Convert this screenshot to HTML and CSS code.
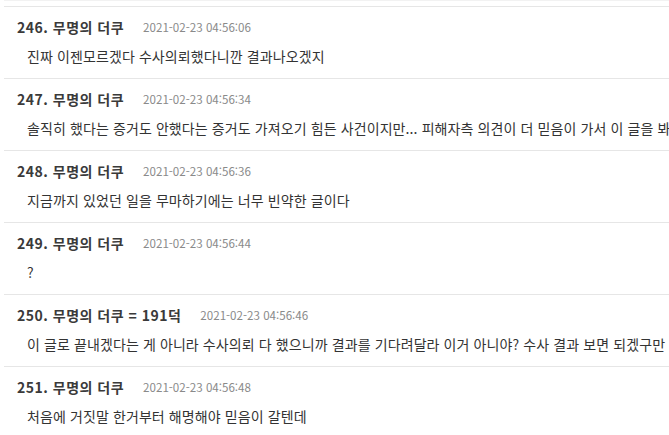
FILE: index.html
```html
<!DOCTYPE html>
<html lang="ko">
  <head>
    <meta charset="UTF-8" />
    <meta name="viewport" content="width=device-width, initial-scale=1.0" />
    <title>댓글</title>
    <link rel="stylesheet" href="styles.css">
  </head>
  <body>
    <ul class="comments">
      <li class="comment">
        <div class="comment-head">
          <span class="author">246. 무명의 더쿠</span>
          <span class="date">2021-02-23 04:56:06</span>
        </div>
        <div class="comment-body">진짜 이젠모르겠다 수사의뢰했다니깐 결과나오겠지</div>
      </li>
      <li class="comment">
        <div class="comment-head">
          <span class="author">247. 무명의 더쿠</span>
          <span class="date">2021-02-23 04:56:34</span>
        </div>
        <div class="comment-body">솔직히 했다는 증거도 안했다는 증거도 가져오기 힘든 사건이지만... 피해자측 의견이 더 믿음이 가서 이 글을 봐도</div>
      </li>
      <li class="comment">
        <div class="comment-head">
          <span class="author">248. 무명의 더쿠</span>
          <span class="date">2021-02-23 04:56:36</span>
        </div>
        <div class="comment-body">지금까지 있었던 일을 무마하기에는 너무 빈약한 글이다</div>
      </li>
      <li class="comment">
        <div class="comment-head">
          <span class="author">249. 무명의 더쿠</span>
          <span class="date">2021-02-23 04:56:44</span>
        </div>
        <div class="comment-body">?</div>
      </li>
      <li class="comment">
        <div class="comment-head">
          <span class="author">250. 무명의 더쿠 = 191덕</span>
          <span class="date">2021-02-23 04:56:46</span>
        </div>
        <div class="comment-body">이 글로 끝내겠다는 게 아니라 수사의뢰 다 했으니까 결과를 기다려달라 이거 아니야? 수사 결과 보면 되겠구만</div>
      </li>
      <li class="comment">
        <div class="comment-head">
          <span class="author">251. 무명의 더쿠</span>
          <span class="date">2021-02-23 04:56:48</span>
        </div>
        <div class="comment-body">처음에 거짓말 한거부터 해명해야 믿음이 갈텐데</div>
      </li>
    </ul>
  </body>
</html>
```

FILE: styles.css
```css
body {
  margin: 0;
  background: #fff;
  font-family: "Noto Sans CJK KR", "Noto Sans", sans-serif;
  color: #333;
  overflow: hidden;
}

.comments {
  list-style: none;
  margin: 0 0 0 4px;
  padding: 1px 0 0;
  border-top: 1px solid #f2f2f2;
}

.comment {
  border-top: 1px solid #e6e6e6;
  padding: 10px 0 12px 13px;
  margin-top: 4px;
}

.comment + .comment {
  margin-top: 0;
}

.comment-head {
  display: flex;
  align-items: center;
  height: 20px;
  line-height: 20px;
  white-space: nowrap;
}

.author {
  font-size: 14px;
  font-weight: bold;
  letter-spacing: 0.5px;
  color: #3a3a3a;
}

.date {
  margin-left: 19px;
  font-size: 11.6px;
  color: #8a8a8a;
}

.comment-body {
  margin-top: 9px;
  padding-left: 10px;
  height: 20px;
  line-height: 20px;
  font-size: 14px;
  letter-spacing: 0.1px;
  color: #333;
  white-space: nowrap;
  overflow: hidden;
}
```
